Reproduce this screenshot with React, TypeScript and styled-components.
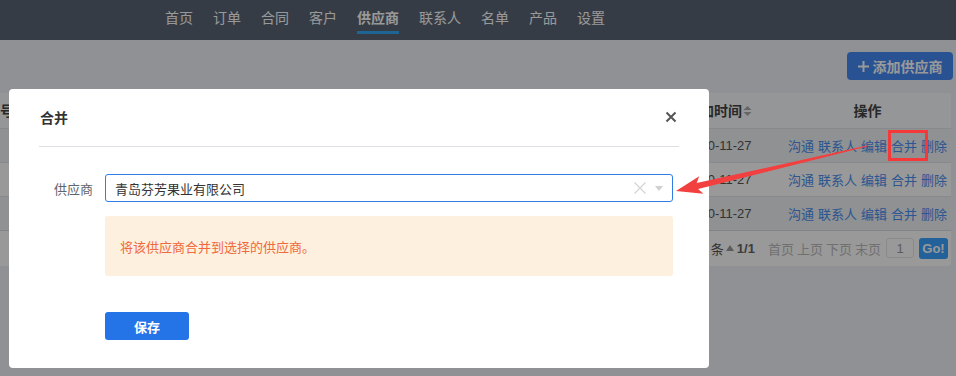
import styled, { createGlobalStyle } from "styled-components";

const GlobalStyle = createGlobalStyle`
    html, body {
        margin: 0;
        padding: 0;
        background: #eef2f7;
        overflow: hidden;
        font-family: "Liberation Sans", "Noto Sans CJK SC", sans-serif;
    }
`;

const NavBar = styled.nav`
    height: 40px;
    background: #5a6473;
    display: flex;
    gap: 20px;
    padding-left: 165px;
`;

const NavItem = styled.a<{ $active?: boolean }>`
    position: relative;
    height: 40px;
    box-sizing: border-box;
    padding-top: 8px;
    line-height: 20px;
    font-size: 14px;
    color: #fff;
    font-weight: ${(p) => (p.$active ? 700 : 400)};
    &::after {
        content: "";
        display: ${(p) => (p.$active ? "block" : "none")};
        position: absolute;
        left: 0;
        right: 0;
        top: 31px;
        height: 3px;
        background: #34a8f5;
    }
`;

const Toolbar = styled.div`
    display: flex;
    justify-content: flex-end;
    padding: 12px 3px 0 0;
`;

const AddButton = styled.button`
    height: 28px;
    width: 106px;
    border: none;
    border-radius: 4px;
    background: #4589f5;
    color: #fff;
    font-family: inherit;
    font-size: 14px;
    font-weight: 700;
    display: flex;
    align-items: center;
    justify-content: center;
    gap: 4px;
`;

const TableWrap = styled.div`
    margin: 13px 5px 0 -20px;
    background: #fff;
    border-radius: 4px;
    overflow: hidden;
`;

const Table = styled.table`
    width: 100%;
    table-layout: fixed;
    border-collapse: collapse;
    font-size: 13px;
    color: #555;
`;

const Th = styled.th<{ $w?: number; $center?: boolean; $pad?: number }>`
    box-sizing: border-box;
    width: ${(p) => (p.$w ? `${p.$w}px` : "auto")};
    height: 35px;
    padding: 0 0 0 ${(p) => (p.$center ? 0 : p.$pad ?? 26)}px;
    text-align: ${(p) => (p.$center ? "center" : "left")};
    font-size: 14px;
    font-weight: 700;
    color: #444;
    background: #f8fbfe;
    white-space: nowrap;
`;

const Tr = styled.tr<{ $striped?: boolean }>`
    background: ${(p) => (p.$striped ? "#eef2f6" : "#fff")};
    border-top: 1px solid #e2e6ea;
`;

const Td = styled.td<{ $center?: boolean }>`
    height: 33px;
    padding: 0 0 0 ${(p) => (p.$center ? 0 : 26)}px;
    text-align: ${(p) => (p.$center ? "center" : "left")};
    white-space: nowrap;
    overflow: hidden;
`;

const Actions = styled.span`
    display: inline-flex;
    gap: 4px;
`;

const Link = styled.a`
    color: #4a8ff0;
    font-size: 13px;
`;

const SortIcon = styled.svg`
    margin-left: 1px;
    vertical-align: -1px;
`;

const PagerRow = styled.tr`
    border-top: 1px solid #d8dce0;
    background: #fff;
`;

const Pager = styled.div`
    height: 33px;
    display: flex;
    align-items: center;
    justify-content: flex-end;
    padding-right: 2px;
    font-size: 13px;
    color: #555;
    white-space: nowrap;
`;

const PagerGroup = styled.span`
    display: inline-flex;
    align-items: center;
    gap: 3px;
    margin-left: 13px;
`;

const PageInfo = styled.b`
    color: #666;
    margin-left: 3px;
`;

const PageLink = styled.span`
    color: #bbb;
`;

const PageInput = styled.span`
    width: 26px;
    height: 18px;
    margin-left: 5px;
    border: 1px solid #e6e6e6;
    border-radius: 3px;
    color: #999;
    display: flex;
    align-items: center;
    justify-content: center;
`;

const GoButton = styled.span`
    width: 29px;
    height: 21px;
    margin-left: 5px;
    border-radius: 3px;
    background: #3aa2ff;
    color: #fff;
    font-weight: 700;
    font-size: 13px;
    display: flex;
    align-items: center;
    justify-content: center;
`;

const Mask = styled.div`
    position: fixed;
    inset: 0;
    background: rgba(0, 0, 0, 0.4);
    padding: 89px 0 0 9px;
`;

const Modal = styled.div`
    width: 700px;
    height: 279px;
    box-sizing: border-box;
    background: #fff;
    border-radius: 4px;
    padding: 0 30px;
`;

const ModalHeader = styled.div`
    height: 58px;
    box-sizing: border-box;
    border-bottom: 1px solid #dcdfe6;
    display: flex;
    align-items: center;
    justify-content: space-between;
    padding: 0 1px 2px 1px;
`;

const ModalTitle = styled.h3`
    margin: 0;
    font-size: 14px;
    font-weight: 700;
    color: #333;
`;

const CloseButton = styled.button`
    width: 12px;
    height: 12px;
    padding: 0;
    border: none;
    background: none;
    display: flex;
    margin-right: 1px;
`;

const ModalBody = styled.div`
    padding: 27px 6px 0 0;
`;

const FormRow = styled.div`
    display: flex;
    align-items: center;
    gap: 12px;
`;

const Label = styled.label`
    width: 54px;
    text-align: right;
    font-size: 13px;
    color: #5f6670;
`;

const Select = styled.div`
    flex: 1;
    height: 28px;
    box-sizing: border-box;
    border: 1px solid #2f7de6;
    border-radius: 3px;
    display: flex;
    align-items: center;
    padding: 0 9px 0 9px;
    font-size: 13px;
    color: #333;
`;

const SelectValue = styled.span`
    flex: 1;
`;

const SelectIcons = styled.span`
    display: flex;
    align-items: center;
    gap: 9px;
`;

const Indented = styled.div`
    margin-left: 66px;
`;

const Alert = styled.div`
    margin-top: 14px;
    height: 60px;
    box-sizing: border-box;
    background: #fef0df;
    border-radius: 3px;
    padding-left: 15px;
    display: flex;
    align-items: center;
    font-size: 13px;
    color: #f0693c;
`;

const SaveButton = styled.button`
    margin-top: 36px;
    width: 84px;
    height: 28px;
    border: none;
    border-radius: 3px;
    background: #2474e8;
    color: #fff;
    font-family: inherit;
    font-size: 13px;
    font-weight: 700;
`;

const Annotation = styled.svg`
    position: fixed;
    left: 0;
    top: 0;
    pointer-events: none;
`;

const navItems = ["首页", "订单", "合同", "客户", "供应商", "联系人", "名单", "产品", "设置"];

const rows = [
    { id: 3, date: "2020-11-27" },
    { id: 2, date: "2020-11-27" },
    { id: 1, date: "2020-11-27" },
];

const actions = ["沟通", "联系人", "编辑", "合并", "删除"];

function Sort() {
    return (
        <SortIcon width="9" height="12" viewBox="0 0 9 12">
            <path d="M4.5 1 L8.5 5 H0.5 Z" fill="#aaa" />
            <path d="M4.5 11 L8.5 7 H0.5 Z" fill="#aaa" />
        </SortIcon>
    );
}

export default function App() {
    return (
        <>
            <GlobalStyle />
            <NavBar>
                {navItems.map((n) => (
                    <NavItem key={n} $active={n === "供应商"}>
                        {n}
                    </NavItem>
                ))}
            </NavBar>
            <Toolbar>
                <AddButton>
                    <svg width="11" height="11" viewBox="0 0 11 11">
                        <path d="M5.5 0 V11 M0 5.5 H11" stroke="#fff" strokeWidth="2" />
                    </svg>
                    添加供应商
                </AddButton>
            </Toolbar>
            <TableWrap>
                <Table>
                    <thead>
                        <tr>
                            <Th $w={80} $pad={6}>编号<Sort /></Th>
                            <Th $w={300} />
                            <Th $w={150} />
                            <Th $w={150} />
                            <Th $w={124}>添加时间<Sort /></Th>
                            <Th $center>操作</Th>
                        </tr>
                    </thead>
                    <tbody>
                        {rows.map((r, i) => (
                            <Tr key={r.id} $striped={i !== 1}>
                                <Td />
                                <Td />
                                <Td />
                                <Td />
                                <Td>{r.date}</Td>
                                <Td $center>
                                    <Actions>
                                        {actions.map((a) => (
                                            <Link key={a}>{a}</Link>
                                        ))}
                                    </Actions>
                                </Td>
                            </Tr>
                        ))}
                        <PagerRow>
                            <td colSpan={6}>
                                <Pager>
                                    <span>共 3 条</span>
                                    <svg width="8" height="6" viewBox="0 0 8 6" style={{ marginLeft: 2 }}>
                                        <path d="M4 0 L8 6 H0 Z" fill="#999" />
                                    </svg>
                                    <PageInfo>1/1</PageInfo>
                                    <PagerGroup>
                                        <PageLink>首页</PageLink>
                                        <PageLink>上页</PageLink>
                                        <PageLink>下页</PageLink>
                                        <PageLink>末页</PageLink>
                                    </PagerGroup>
                                    <PageInput>1</PageInput>
                                    <GoButton>Go!</GoButton>
                                </Pager>
                            </td>
                        </PagerRow>
                    </tbody>
                </Table>
            </TableWrap>

            <Mask>
                <Modal>
                    <ModalHeader>
                        <ModalTitle>合并</ModalTitle>
                        <CloseButton aria-label="关闭">
                            <svg width="12" height="12" viewBox="0 0 12 12">
                                <path d="M1.5 1.5 L10.5 10.5 M10.5 1.5 L1.5 10.5" stroke="#555" strokeWidth="2" />
                            </svg>
                        </CloseButton>
                    </ModalHeader>
                    <ModalBody>
                        <FormRow>
                            <Label>供应商</Label>
                            <Select>
                                <SelectValue>青岛芬芳果业有限公司</SelectValue>
                                <SelectIcons>
                                    <svg width="12" height="12" viewBox="0 0 12 12">
                                        <path d="M0.5 0.5 L11.5 11.5 M11.5 0.5 L0.5 11.5" stroke="#d3d3d3" strokeWidth="1.2" />
                                    </svg>
                                    <svg width="8" height="5" viewBox="0 0 8 5">
                                        <path d="M0 0 H8 L4 5 Z" fill="#d0d0d0" />
                                    </svg>
                                </SelectIcons>
                            </Select>
                        </FormRow>
                        <Indented>
                            <Alert>将该供应商合并到选择的供应商。</Alert>
                            <SaveButton>保存</SaveButton>
                        </Indented>
                    </ModalBody>
                </Modal>
            </Mask>

            <Annotation width="956" height="376" viewBox="0 0 956 376">
                <rect x="889.5" y="131.5" width="37" height="28" fill="none" stroke="#f53838" strokeWidth="3" />
                <polygon
                    points="676,191 699.2,176.2 696.7,183.1 866.9,145.4 867.1,146.6 698.1,188.9 703.4,193.8"
                    fill="#f23f3f"
                />
            </Annotation>
        </>
    );
}
